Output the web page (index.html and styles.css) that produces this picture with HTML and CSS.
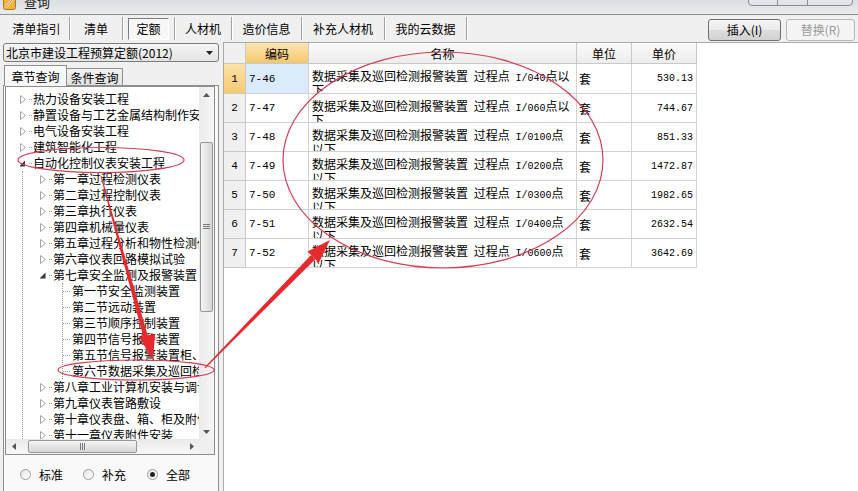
FILE: index.html
```html
<!DOCTYPE html>
<html lang="zh-CN">
<head>
<meta charset="utf-8">
<title>查询</title>
<link rel="stylesheet" href="styles.css">
</head>
<body>
<div class="titlebar">
  <svg class="app-icon" width="13" height="13" viewBox="0 0 13 13"><rect x="0.5" y="0.5" width="12" height="12" rx="2" fill="#f2b43a" stroke="#b77a12"/><path d="M3 10 L10 2" stroke="#fff" stroke-width="2"/><path d="M3 10 L10 2" stroke="#8a4a10" stroke-width="0.8"/></svg>
  <span class="title">查询</span>
  <div class="winbtns"><span class="wb wb-min"></span><span class="wb wb-max"></span><span class="wb wb-close"></span></div>
</div>

<div class="toolbar">
  <div class="tabs">
    <div class="tab">清单指引</div>
    <div class="tab">清单</div>
    <div class="tab"><span class="sunken">定额</span></div>
    <div class="tab">人材机</div>
    <div class="tab">造价信息</div>
    <div class="tab">补充人材机</div>
    <div class="tab">我的云数据</div>
  </div>
  <div class="actions">
    <button class="btn btn-insert">插入(I)</button>
    <button class="btn btn-replace" disabled>替换(R)</button>
  </div>
</div>

<div class="main">
  <aside class="left">
    <div class="combo"><span>北京市建设工程预算定额(2012)</span><svg class="combo-arrow" width="7" height="4" viewBox="0 0 7 4"><path d="M0 0 H7 L3.5 4 Z" fill="#222"/></svg></div>
    <div class="ltabs"><div class="ltab active">章节查询</div><div class="ltab">条件查询</div></div>
    <div class="page">
      <div class="tree">
        <div class="tree-list">
          <div class="item l0"><svg class="exp" width="13" height="9" viewBox="0 0 13 9"><path d="M0.5 0.5 L5.5 4.5 L0.5 8.5 Z" fill="#fff" stroke="#a8a8a8"/><rect x="9" y="4" width="1" height="1" fill="#999"/><rect x="11" y="4" width="1" height="1" fill="#999"/></svg><span>热力设备安装工程</span></div>
          <div class="item l0"><svg class="exp" width="13" height="9" viewBox="0 0 13 9"><path d="M0.5 0.5 L5.5 4.5 L0.5 8.5 Z" fill="#fff" stroke="#a8a8a8"/><rect x="9" y="4" width="1" height="1" fill="#999"/><rect x="11" y="4" width="1" height="1" fill="#999"/></svg><span>静置设备与工艺金属结构制作安装工程</span></div>
          <div class="item l0"><svg class="exp" width="13" height="9" viewBox="0 0 13 9"><path d="M0.5 0.5 L5.5 4.5 L0.5 8.5 Z" fill="#fff" stroke="#a8a8a8"/><rect x="9" y="4" width="1" height="1" fill="#999"/><rect x="11" y="4" width="1" height="1" fill="#999"/></svg><span>电气设备安装工程</span></div>
          <div class="item l0"><svg class="exp" width="13" height="9" viewBox="0 0 13 9"><path d="M0.5 0.5 L5.5 4.5 L0.5 8.5 Z" fill="#fff" stroke="#a8a8a8"/><rect x="9" y="4" width="1" height="1" fill="#999"/><rect x="11" y="4" width="1" height="1" fill="#999"/></svg><span>建筑智能化工程</span></div>
          <div class="item l0"><svg class="exp" width="13" height="9" viewBox="0 0 13 9"><path d="M5 1.5 L5 7.5 L-1 7.5 Z" fill="#3a3a3a"/><rect x="9" y="4" width="1" height="1" fill="#999"/><rect x="11" y="4" width="1" height="1" fill="#999"/></svg><span>自动化控制仪表安装工程</span></div>
          <div class="grp grp1">
            <div class="item l1"><svg class="exp" width="13" height="9" viewBox="0 0 13 9"><path d="M0.5 0.5 L5.5 4.5 L0.5 8.5 Z" fill="#fff" stroke="#a8a8a8"/><rect x="9" y="4" width="1" height="1" fill="#999"/><rect x="11" y="4" width="1" height="1" fill="#999"/></svg><span>第一章过程检测仪表</span></div>
            <div class="item l1"><svg class="exp" width="13" height="9" viewBox="0 0 13 9"><path d="M0.5 0.5 L5.5 4.5 L0.5 8.5 Z" fill="#fff" stroke="#a8a8a8"/><rect x="9" y="4" width="1" height="1" fill="#999"/><rect x="11" y="4" width="1" height="1" fill="#999"/></svg><span>第二章过程控制仪表</span></div>
            <div class="item l1"><svg class="exp" width="13" height="9" viewBox="0 0 13 9"><path d="M0.5 0.5 L5.5 4.5 L0.5 8.5 Z" fill="#fff" stroke="#a8a8a8"/><rect x="9" y="4" width="1" height="1" fill="#999"/><rect x="11" y="4" width="1" height="1" fill="#999"/></svg><span>第三章执行仪表</span></div>
            <div class="item l1"><svg class="exp" width="13" height="9" viewBox="0 0 13 9"><path d="M0.5 0.5 L5.5 4.5 L0.5 8.5 Z" fill="#fff" stroke="#a8a8a8"/><rect x="9" y="4" width="1" height="1" fill="#999"/><rect x="11" y="4" width="1" height="1" fill="#999"/></svg><span>第四章机械量仪表</span></div>
            <div class="item l1"><svg class="exp" width="13" height="9" viewBox="0 0 13 9"><path d="M0.5 0.5 L5.5 4.5 L0.5 8.5 Z" fill="#fff" stroke="#a8a8a8"/><rect x="9" y="4" width="1" height="1" fill="#999"/><rect x="11" y="4" width="1" height="1" fill="#999"/></svg><span>第五章过程分析和物性检测仪表</span></div>
            <div class="item l1"><svg class="exp" width="13" height="9" viewBox="0 0 13 9"><path d="M0.5 0.5 L5.5 4.5 L0.5 8.5 Z" fill="#fff" stroke="#a8a8a8"/><rect x="9" y="4" width="1" height="1" fill="#999"/><rect x="11" y="4" width="1" height="1" fill="#999"/></svg><span>第六章仪表回路模拟试验</span></div>
            <div class="item l1"><svg class="exp" width="13" height="9" viewBox="0 0 13 9"><path d="M5.5 1.5 L5.5 7.5 L-0.5 7.5 Z" fill="#3a3a3a"/><rect x="9" y="4" width="1" height="1" fill="#999"/><rect x="11" y="4" width="1" height="1" fill="#999"/></svg><span>第七章安全监测及报警装置</span></div>
            <div class="grp grp2">
              <div class="item l2"><span class="conn"></span><span>第一节安全监测装置</span></div>
              <div class="item l2"><span class="conn"></span><span>第二节远动装置</span></div>
              <div class="item l2"><span class="conn"></span><span>第三节顺序控制装置</span></div>
              <div class="item l2"><span class="conn"></span><span>第四节信号报警装置</span></div>
              <div class="item l2"><span class="conn"></span><span>第五节信号报警装置柜、箱</span></div>
              <div class="item l2"><span class="conn"></span><span>第六节数据采集及巡回检测报警装置</span></div>
            </div>
            <div class="item l1"><svg class="exp" width="13" height="9" viewBox="0 0 13 9"><path d="M0.5 0.5 L5.5 4.5 L0.5 8.5 Z" fill="#fff" stroke="#a8a8a8"/><rect x="9" y="4" width="1" height="1" fill="#999"/><rect x="11" y="4" width="1" height="1" fill="#999"/></svg><span>第八章工业计算机安装与调试</span></div>
            <div class="item l1"><svg class="exp" width="13" height="9" viewBox="0 0 13 9"><path d="M0.5 0.5 L5.5 4.5 L0.5 8.5 Z" fill="#fff" stroke="#a8a8a8"/><rect x="9" y="4" width="1" height="1" fill="#999"/><rect x="11" y="4" width="1" height="1" fill="#999"/></svg><span>第九章仪表管路敷设</span></div>
            <div class="item l1"><svg class="exp" width="13" height="9" viewBox="0 0 13 9"><path d="M0.5 0.5 L5.5 4.5 L0.5 8.5 Z" fill="#fff" stroke="#a8a8a8"/><rect x="9" y="4" width="1" height="1" fill="#999"/><rect x="11" y="4" width="1" height="1" fill="#999"/></svg><span>第十章仪表盘、箱、柜及附件安装</span></div>
            <div class="item l1"><svg class="exp" width="13" height="9" viewBox="0 0 13 9"><path d="M0.5 0.5 L5.5 4.5 L0.5 8.5 Z" fill="#fff" stroke="#a8a8a8"/><rect x="9" y="4" width="1" height="1" fill="#999"/><rect x="11" y="4" width="1" height="1" fill="#999"/></svg><span>第十一章仪表附件安装</span></div>
          </div>
        </div>
        <div class="vscroll">
          <div class="sbtn"><svg width="7" height="4" viewBox="0 0 7 4"><path d="M0 4 H7 L3.5 0 Z" fill="#555"/></svg></div>
          <div class="vtrack"><div class="vthumb"><svg width="7" height="6" viewBox="0 0 7 6"><path d="M0 0.5H7M0 2.5H7M0 4.5H7" stroke="#7a7a7a"/></svg></div></div>
          <div class="sbtn"><svg width="7" height="4" viewBox="0 0 7 4"><path d="M0 0 H7 L3.5 4 Z" fill="#555"/></svg></div>
        </div>
        <div class="hscroll">
          <div class="sbtn"><svg width="4" height="7" viewBox="0 0 4 7"><path d="M4 0 V7 L0 3.5 Z" fill="#555"/></svg></div>
          <div class="htrack"><div class="hthumb"><svg width="6" height="7" viewBox="0 0 6 7"><path d="M0.5 0V7M2.5 0V7M4.5 0V7" stroke="#7a7a7a"/></svg></div></div>
          <div class="sbtn"><svg width="4" height="7" viewBox="0 0 4 7"><path d="M0 0 V7 L4 3.5 Z" fill="#555"/></svg></div>
        </div>
        <div class="corner"></div>
      </div>
      <div class="radios">
        <label class="radio"><span class="dot"></span>标准</label>
        <label class="radio"><span class="dot"></span>补充</label>
        <label class="radio"><span class="dot checked"></span>全部</label>
      </div>
    </div>
  </aside>

  <section class="right">
    <div class="grid">
      <div class="c h corner-h"></div>
      <div class="c h sel">编码</div>
      <div class="c h">名称</div>
      <div class="c h">单位</div>
      <div class="c h">单价</div>

      <div class="c rh sel">1</div>
      <div class="c code sel">7-46</div>
      <div class="c name">数据采集及巡回检测报警装置 过程点 <span class="lat">I/040</span>点以<br>下</div>
      <div class="c unit">套</div>
      <div class="c price">530.13</div>

      <div class="c rh">2</div>
      <div class="c code">7-47</div>
      <div class="c name">数据采集及巡回检测报警装置 过程点 <span class="lat">I/060</span>点以<br>下</div>
      <div class="c unit">套</div>
      <div class="c price">744.67</div>

      <div class="c rh">3</div>
      <div class="c code">7-48</div>
      <div class="c name">数据采集及巡回检测报警装置 过程点 <span class="lat">I/0100</span>点<br>以下</div>
      <div class="c unit">套</div>
      <div class="c price">851.33</div>

      <div class="c rh">4</div>
      <div class="c code">7-49</div>
      <div class="c name">数据采集及巡回检测报警装置 过程点 <span class="lat">I/0200</span>点<br>以下</div>
      <div class="c unit">套</div>
      <div class="c price">1472.87</div>

      <div class="c rh">5</div>
      <div class="c code">7-50</div>
      <div class="c name">数据采集及巡回检测报警装置 过程点 <span class="lat">I/0300</span>点<br>以下</div>
      <div class="c unit">套</div>
      <div class="c price">1982.65</div>

      <div class="c rh">6</div>
      <div class="c code">7-51</div>
      <div class="c name">数据采集及巡回检测报警装置 过程点 <span class="lat">I/0400</span>点<br>以下</div>
      <div class="c unit">套</div>
      <div class="c price">2632.54</div>

      <div class="c rh">7</div>
      <div class="c code">7-52</div>
      <div class="c name">数据采集及巡回检测报警装置 过程点 <span class="lat">I/0600</span>点<br>以下</div>
      <div class="c unit">套</div>
      <div class="c price">3642.69</div>
    </div>
  </section>
</div>

<svg class="annot" width="858" height="491" viewBox="0 0 858 491">
  <g fill="none" stroke="#d63c55" stroke-width="1.2">
    <ellipse cx="443" cy="160" rx="160" ry="108"/>
    <ellipse cx="101" cy="160" rx="83" ry="12.5"/>
    <ellipse cx="136" cy="370" rx="78" ry="10"/>
  </g>
  <g fill="#e8282c">
    <polygon points="100.5,176 101.5,176 148.5,338 144,339.5"/>
    <polygon points="139,337 155,334 153,360"/>
    <polygon points="204.5,367.4 205.4,368.2 315.3,259.2 311.1,255"/>
    <polygon points="318.9,262.7 307.5,251.5 330,240"/>
  </g>
</svg>
</body>
</html>
```

FILE: styles.css
```css
* { box-sizing: border-box; }

html, body { margin: 0; padding: 0; }

body {
  width: 858px;
  height: 491px;
  overflow: hidden;
  position: relative;
  background: #f0f0f0;
  font-family: "Noto Sans CJK SC", "Liberation Sans", sans-serif;
  font-size: 12px;
  color: #000;
}

/* title bar */
.titlebar {
  height: 15px;
  display: flex;
  align-items: flex-start;
  overflow: hidden;
  background: linear-gradient(#dcdfe3, #e9ebee);
  border-bottom: 1px solid #8d9096;
}
.app-icon { margin: -3px 0 0 3px; flex: none; }
.title { margin: -7px 0 0 8px; font-size: 13px; line-height: 18px; color: #222; }
.winbtns {
  margin: -12px 5px 0 auto;
  display: flex;
  height: 18px;
  border: 1px solid #8a8d92;
  border-radius: 4px;
  overflow: hidden;
  background: linear-gradient(#f0f1f3, #dfe2e6);
}
.wb { display: block; height: 100%; border-right: 1px solid #8a8d92; }
.wb-min { width: 29px; }
.wb-max { width: 30px; }
.wb-close { width: 44px; border-right: none; }

/* toolbar */
.toolbar {
  height: 27px;
  display: flex;
  align-items: center;
  padding-left: 4px;
}
.tabs { display: flex; height: 23px; }
.tab {
  display: flex;
  align-items: center;
  justify-content: center;
  white-space: nowrap;
  border-right: 1px solid #a3a3a3;
  box-shadow: 1px 0 0 #fff;
}
.tab:nth-child(1) { width: 66px; }
.tab:nth-child(2) { width: 53px; }
.tab:nth-child(3) { width: 52px; justify-content: flex-start; padding-left: 5px; }
.tab:nth-child(4) { width: 57px; }
.tab:nth-child(5) { width: 70px; }
.tab:nth-child(6) { width: 83px; }
.tab:nth-child(7) { width: 82px; }
.sunken {
  width: 41px;
  height: 22px;
  display: flex;
  align-items: center;
  justify-content: center;
  border: 1px solid;
  border-color: #7d7d7d #ffffff #ffffff #7d7d7d;
  background: #f7f7f7;
}
.actions {
  margin-left: auto;
  margin-right: 3px;
  align-self: flex-end;
  display: flex;
  gap: 5px;
  padding-bottom: 1px;
}
.btn {
  height: 22px;
  font: inherit;
  font-size: 12px;
  padding: 0;
  border: 1px solid #707070;
  border-radius: 3px;
  background: linear-gradient(#f4f4f4 0%, #ebebeb 48%, #dddddd 52%, #d2d2d2 100%);
  color: #000;
  line-height: 20px;
}
.btn-insert { width: 73px; }
.btn-replace {
  width: 69px;
  border-color: #b5b9bd;
  background: #f4f4f4;
  color: #9a9a9a;
}

/* main */
.main { display: flex; height: 449px; }

.left {
  width: 220px;
  flex: none;
  padding-left: 3px;
  display: flex;
  flex-direction: column;
}
.combo {
  margin-top: 1px;
  width: 216px;
  height: 19px;
  border: 1px solid #7b7b7b;
  border-radius: 3px;
  background: linear-gradient(#f5f5f5, #e4e4e4);
  display: flex;
  align-items: center;
  padding: 0 5px 0 2px;
  white-space: nowrap;
}
.combo-arrow { margin-left: auto; }

.ltabs {
  margin-top: 3px;
  height: 20px;
  display: flex;
  align-items: flex-end;
  padding-left: 1px;
  position: relative;
  z-index: 1;
}
.ltab {
  height: 17px;
  width: 56px;
  display: flex;
  align-items: center;
  justify-content: center;
  border: 1px solid #8e8f8f;
  border-bottom: none;
  background: linear-gradient(#f2f2f2, #e2e2e2);
  font-size: 12px;
}
.ltab.active {
  height: 21px;
  width: 63px;
  margin-bottom: -1px;
  background: #f9f9f9;
  border-right: 1px solid #8e8f8f;
}
.ltab.active + .ltab { border-left: none; }

.page {
  flex: 1;
  width: 216px;
  border: 1px solid #8e8f8f;
  border-bottom: none;
  background: #f9f9f9;
  padding: 0 3px 0 1px;
}

.tree {
  height: 369px;
  border: 1px solid #8b8d92;
  background: #fff;
  display: grid;
  grid-template-columns: 1fr 15px;
  grid-template-rows: 1fr 15px;
}
.tree-list {
  overflow: hidden;
  padding-top: 4px;
  background: #fff;
}
.item {
  height: 16px;
  display: flex;
  align-items: center;
  white-space: nowrap;
  line-height: 16px;
}
.item .exp { flex: none; }
.item.l0 { padding-left: 14px; }
.item.l1 { padding-left: 17px; }
.grp { border-left: 1px dotted #9a9a9a; }
.grp1 { margin-left: 16px; }
.grp2 { margin-left: 39px; }
.conn {
  width: 7px;
  margin-right: 2px;
  border-top: 1px dotted #9a9a9a;
  flex: none;
}

/* scrollbars */
.vscroll, .hscroll {
  display: flex;
  background: linear-gradient(90deg, #eaeaea, #f7f7f7);
}
.vscroll { flex-direction: column; }
.hscroll { background: linear-gradient(#eaeaea, #f7f7f7); }
.sbtn {
  width: 15px;
  height: 15px;
  flex: none;
  display: flex;
  align-items: center;
  justify-content: center;
}
.vtrack, .htrack { flex: 1; display: flex; }
.vtrack { flex-direction: column; }
.vthumb {
  margin-top: 40px;
  height: 170px;
  margin-left: 1px;
  width: 13px;
  border: 1px solid #979797;
  border-radius: 2px;
  background: linear-gradient(90deg, #f4f4f4, #e6e6e6 50%, #d5d5d5);
  display: flex;
  align-items: center;
  justify-content: center;
}
.htrack { align-items: center; }
.hthumb {
  margin-left: 7px;
  width: 109px;
  height: 13px;
  border: 1px solid #979797;
  border-radius: 2px;
  background: linear-gradient(#f4f4f4, #e6e6e6 50%, #d5d5d5);
  display: flex;
  align-items: center;
  justify-content: center;
}
.corner { background: #f0f0f0; }

/* radios */
.radios {
  height: 36px;
  display: flex;
  align-items: center;
  padding-left: 15px;
  padding-top: 2px;
}
.radio {
  display: flex;
  align-items: center;
  margin-right: 20px;
  font-size: 12px;
}
.radio:nth-child(2) { margin-right: 21px; }
.dot {
  width: 11px;
  height: 11px;
  border-radius: 50%;
  border: 1px solid #9c9c9c;
  background: linear-gradient(135deg, #e6e6e6, #ffffff);
  margin-right: 8px;
  position: relative;
  flex: none;
}
.dot.checked::after {
  content: "";
  position: absolute;
  left: 2px;
  top: 2px;
  width: 5px;
  height: 5px;
  border-radius: 50%;
  background: #222;
}

/* right grid */
.right {
  flex: 1;
  margin-left: 3px;
  background: #fff;
  border-top: 1px solid #a9a9a9;
  border-left: 1px solid #a9a9a9;
}
.grid {
  display: grid;
  grid-template-columns: 22px 63px 268px 55px 65px;
  grid-template-rows: 21px 30px repeat(6, 29px);
  width: 473px;
}
.c {
  border-right: 1px solid #d2d2d2;
  border-bottom: 1px solid #d2d2d2;
  display: flex;
  align-items: center;
  overflow: hidden;
  white-space: nowrap;
}
.h {
  justify-content: center;
  background: linear-gradient(#fafafa, #ededed);
  border-color: #c9c9c9;
  font-size: 12px;
}
.h.sel { background: linear-gradient(#fce6b3, #f5c76c); }
.corner-h { background: #f0f0f0; }
.rh {
  justify-content: center;
  background: #f0f0f0;
  border-color: #c9c9c9;
  font-family: "Liberation Mono", monospace;
  font-size: 11px;
}
.rh.sel { background: linear-gradient(#fbe2a6, #f6ca72); }
.code {
  padding-left: 3px;
  font-family: "Liberation Mono", monospace;
  font-size: 11px;
}
.code.sel { background: #dcebfb; }
.name {
  display: block;
  padding: 6px 0 0 3px;
  line-height: 11px;
  word-spacing: 3px;
}
.lat { font-family: "Liberation Mono", monospace; font-size: 10px; word-spacing: 0; }
.unit { padding-left: 2px; }
.price {
  justify-content: flex-end;
  padding-right: 3px;
  font-family: "Liberation Mono", monospace;
  font-size: 10px;
}

/* annotation overlay */
.annot {
  position: absolute;
  left: 0;
  top: 0;
  pointer-events: none;
}
```
